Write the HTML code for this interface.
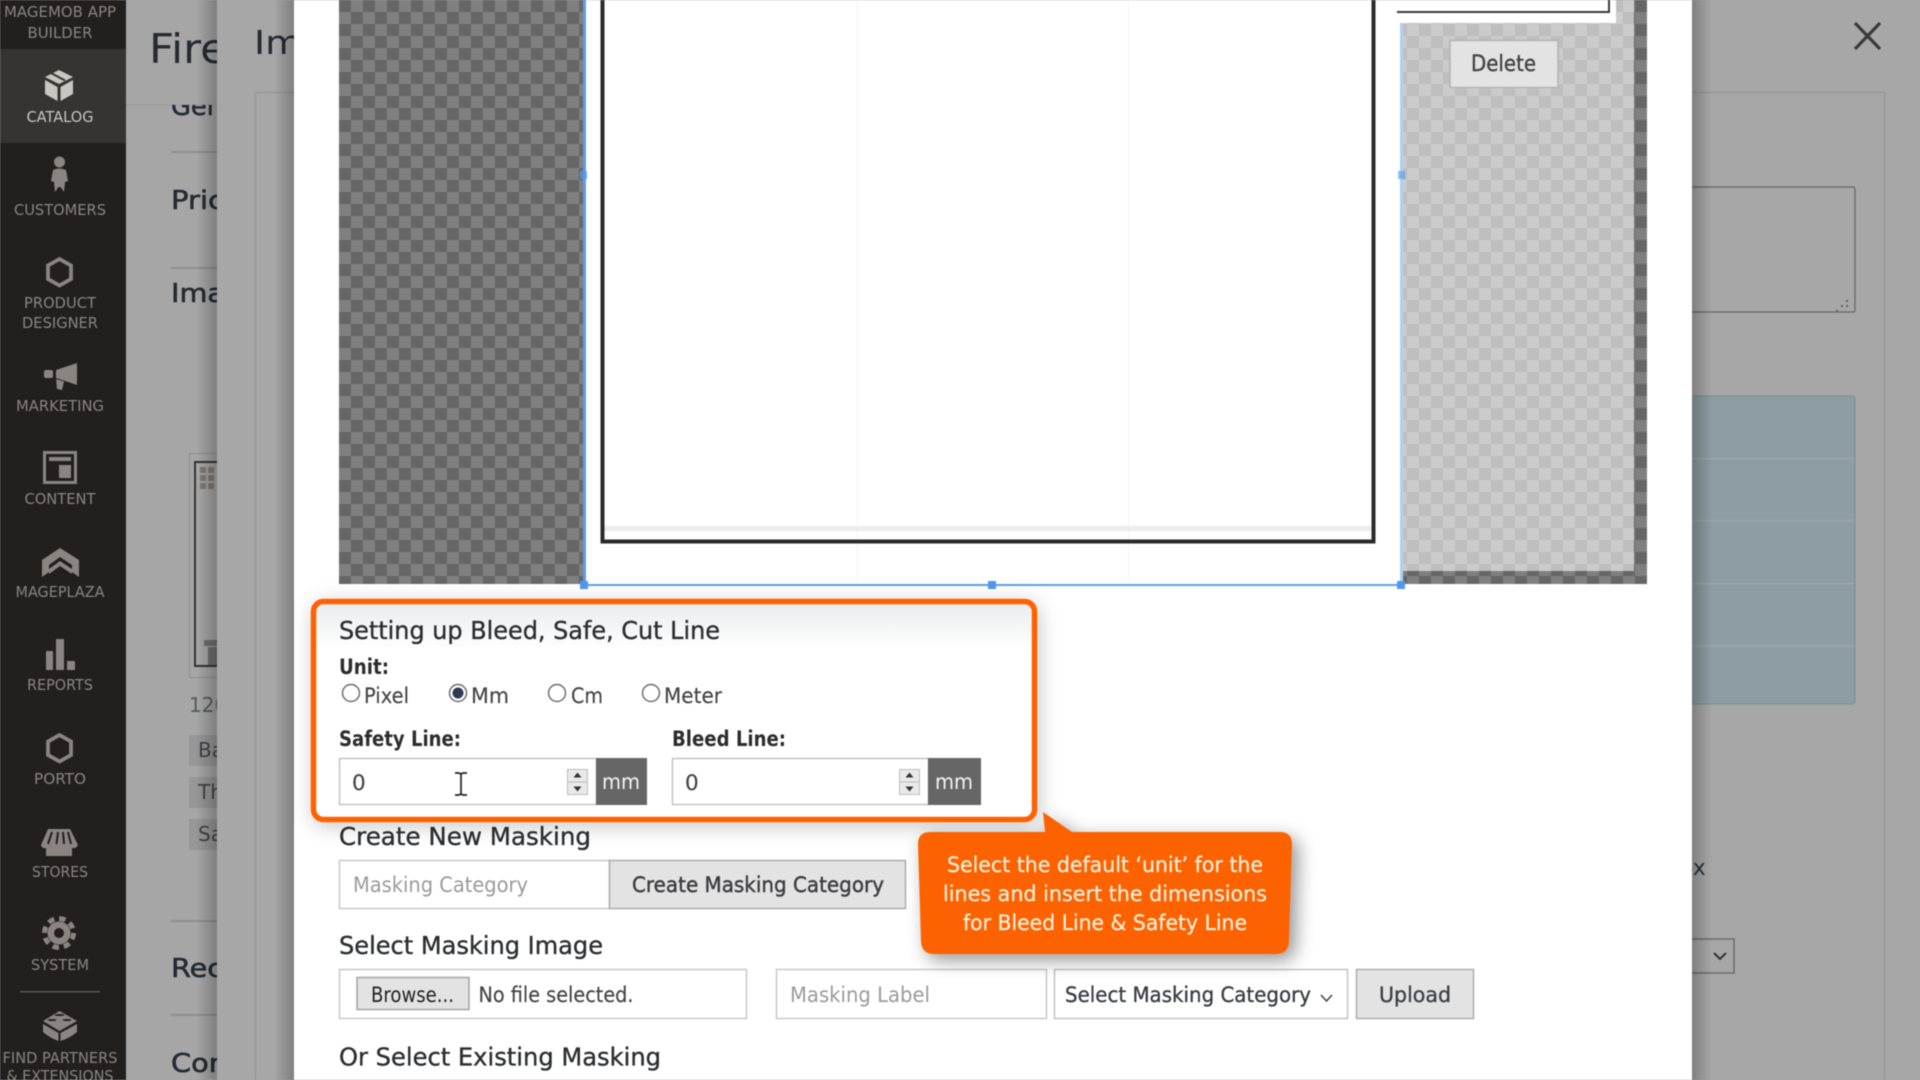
<!DOCTYPE html>
<html lang="en">
<head>
<meta charset="utf-8">
<title>Bleed, Safe, Cut Line</title>
<style>
html,body{margin:0;padding:0;width:1920px;height:1080px;overflow:hidden;background:#a6a6a6}
svg{display:block;filter:blur(.55px)}
text{font-family:"DejaVu Sans","Liberation Sans",sans-serif}
.n{font-size:15px;fill:#8a8580;text-anchor:middle}
.h{font-size:25px;fill:#2b2d2f;stroke:#2b2d2f;stroke-width:.35px}
.b{font-size:21px;fill:#2c2c2c;font-weight:bold}
.r{font-size:21.500px;fill:#444;stroke:#444;stroke-width:.15px}
.p{font-size:21.500px;fill:#9a9a9a}
.k{font-size:26px;fill:#252b33;stroke:#252b33;stroke-width:.6px}
.c{font-size:21.500px;fill:#fff1dd;text-anchor:middle;stroke:#fff1dd;stroke-width:.2px}
.i{fill:#8a8580}
</style>
</head>
<body>
<svg xmlns="http://www.w3.org/2000/svg" width="1920" height="1080" viewBox="0 0 1920 1080">
<defs>
<pattern id="pd" width="24" height="24" patternUnits="userSpaceOnUse" x="339" y="0">
<rect width="24" height="24" fill="#808080"/><rect width="12" height="12" fill="#666"/><rect x="12" y="12" width="12" height="12" fill="#666"/>
</pattern>
<pattern id="pl" width="24" height="24" patternUnits="userSpaceOnUse" x="339" y="0">
<rect width="24" height="24" fill="#cbcbcb"/><rect width="12" height="12" fill="#bebebe"/><rect x="12" y="12" width="12" height="12" fill="#bebebe"/>
</pattern>
<linearGradient id="sl" x1="0" x2="1" y1="0" y2="0"><stop offset="0" stop-color="#000" stop-opacity="0"/><stop offset="1" stop-color="#000" stop-opacity=".24"/></linearGradient>
<linearGradient id="sr" x1="0" x2="1" y1="0" y2="0"><stop offset="0" stop-color="#000" stop-opacity=".24"/><stop offset="1" stop-color="#000" stop-opacity="0"/></linearGradient>
<linearGradient id="top" x1="0" x2="0" y1="0" y2="1"><stop offset="0" stop-color="#e9ebec"/><stop offset=".22" stop-color="#fff"/></linearGradient>
<filter id="fc" x="-20%" y="-30%" width="150%" height="170%"><feDropShadow dx="6" dy="6" stdDeviation="9" flood-color="#000" flood-opacity=".42"/></filter>
<filter id="fb" x="-10%" y="-20%" width="120%" height="140%"><feDropShadow dx="2" dy="4" stdDeviation="10" flood-color="#000" flood-opacity=".22"/></filter>
</defs>

<!-- base -->
<rect width="1920" height="1080" fill="#a6a6a6"/>

<!-- background page content -->
<text x="171" y="115" class="k" textLength="52" lengthAdjust="spacingAndGlyphs">Gen</text>
<rect x="126" y="0" width="100" height="104" fill="#a6a6a6"/>
<rect x="126" y="104" width="100" height="1" fill="#999"/>
<text x="149" y="63" font-size="41" fill="#262b31" textLength="78" lengthAdjust="spacingAndGlyphs">Fire</text>
<rect x="171" y="151" width="60" height="2" fill="#8f8f8f"/>
<rect x="171" y="267" width="60" height="2" fill="#8f8f8f"/>
<rect x="171" y="920" width="60" height="2" fill="#8f8f8f"/>
<rect x="171" y="1014" width="60" height="2" fill="#8f8f8f"/>
<text x="171" y="209" class="k" textLength="53" lengthAdjust="spacingAndGlyphs">Pric</text>
<text x="171" y="302" class="k" textLength="54" lengthAdjust="spacingAndGlyphs">Ima</text>
<text x="171" y="977" class="k" textLength="52" lengthAdjust="spacingAndGlyphs">Rec</text>
<text x="171" y="1072" class="k" textLength="56" lengthAdjust="spacingAndGlyphs">Con</text>
<rect x="189.500" y="453.500" width="50" height="224" fill="none" stroke="#8d8d8d"/>
<rect x="195" y="462" width="50" height="204" fill="none" stroke="#333" stroke-width="2"/>
<g fill="#7f7a77"><rect x="200" y="467" width="6" height="6"/><rect x="208" y="467" width="6" height="6"/><rect x="200" y="475" width="6" height="6"/><rect x="208" y="475" width="6" height="6"/><rect x="200" y="483" width="6" height="6"/><rect x="208" y="483" width="6" height="6"/></g>
<path d="M204 640h24v6h-24zM208 647h22v18h-22z" fill="#6f6f6f"/>
<text x="189" y="712" font-size="20" fill="#56595c">120</text>
<rect x="189" y="735" width="40" height="31" fill="#979797"/>
<rect x="189" y="777" width="40" height="31" fill="#979797"/>
<rect x="189" y="819" width="40" height="31" fill="#979797"/>
<text x="198" y="757" font-size="20" fill="#3f4246">Ba</text>
<text x="198" y="799" font-size="20" fill="#3f4246">Th</text>
<text x="198" y="841" font-size="20" fill="#3f4246">Sa</text>

<!-- panel shadow + panel 2 -->
<rect x="196" y="0" width="21" height="1080" fill="url(#sl)"/>
<rect x="217" y="0" width="1703" height="1080" fill="#a7a7a7"/>
<text x="254" y="54" font-size="33" fill="#262b31" textLength="48" lengthAdjust="spacingAndGlyphs">Im</text>
<path d="M255.500 1080V92.500H1884.500V1080" fill="none" stroke="#999" stroke-width="1.500"/>

<!-- right side content -->
<rect x="1600" y="187" width="255" height="125" rx="2" fill="none" stroke="#707070" stroke-width="1.500"/>
<g fill="#5f5f5f"><rect x="1846" y="300" width="2" height="2"/><rect x="1841" y="305" width="2" height="2"/><rect x="1846" y="305" width="2" height="2"/><rect x="1836" y="310" width="2" height="2"/></g>
<rect x="1600" y="396" width="255" height="308" rx="3" fill="#8d9da2" stroke="#808b8f"/>
<g fill="#9aa8ac"><rect x="1600" y="458" width="254" height="1.500"/><rect x="1600" y="520" width="254" height="1.500"/><rect x="1600" y="583" width="254" height="1.500"/><rect x="1600" y="645" width="254" height="1.500"/></g>
<text x="1680" y="875" font-size="22" fill="#2c3238">ox</text>
<rect x="1600" y="939" width="134" height="34" fill="none" stroke="#6c6c6c" stroke-width="1.500"/>
<path d="M1714 953l6 6 6-6" fill="none" stroke="#333" stroke-width="2"/>
<path d="M1855 23L1880 49M1880 23L1855 49" stroke="#3a3a3c" stroke-width="3.200" fill="none"/>

<!-- modal -->
<rect x="274" y="0" width="20" height="1080" fill="url(#sl)"/>
<rect x="1692" y="0" width="20" height="1080" fill="url(#sr)"/>
<rect x="294" y="0" width="1398" height="1080" fill="#fff"/>

<!-- canvas -->
<rect x="339" y="0" width="1308" height="584" fill="url(#pd)"/>
<rect x="1401" y="0" width="233" height="571" fill="url(#pl)"/>
<rect x="1401" y="0" width="2" height="585" fill="#b6d3f5"/>
<rect x="584" y="0" width="817" height="585" fill="#fff"/>
<rect x="583" y="0" width="3" height="585" fill="#5f9be0"/>
<rect x="1400" y="0" width="2" height="585" fill="#a9cdf6"/>
<rect x="584" y="584" width="818" height="2" fill="#5b9ff0"/>
<g fill="#efefef" opacity=".6"><rect x="857" y="0" width="1" height="584"/><rect x="1128" y="0" width="1" height="584"/></g>
<rect x="604" y="526" width="767" height="5" fill="#ececec"/>
<path d="M602.500 0V541.500H1373.500V0" fill="none" stroke="#2b2b2b" stroke-width="4"/>
<g fill="#4f97f2">
<rect x="580" y="171" width="7" height="8" opacity=".75"/><rect x="1398" y="171" width="7" height="8" opacity=".6"/>
<rect x="580" y="581" width="8" height="8"/><rect x="988" y="581" width="8" height="8"/><rect x="1397" y="581" width="8" height="8"/>
</g>
<rect x="1396" y="0" width="220" height="23" fill="#fff"/>
<path d="M1397 12H1609V0" fill="none" stroke="#3a3a3a" stroke-width="2"/>
<rect x="1450" y="40.500" width="108" height="47" fill="#e3e3e3" stroke="#b3b3b3" stroke-width="1.500"/>
<text x="1471" y="71" font-size="22" fill="#454548" stroke="#454548" stroke-width=".4" textLength="65" lengthAdjust="spacingAndGlyphs">Delete</text>

<!-- orange box -->
<rect x="313.500" y="601.500" width="721" height="218" rx="10" fill="url(#top)" stroke="#fd6205" stroke-width="5.500" filter="url(#fb)"/>
<text x="339" y="639" class="h" textLength="381" lengthAdjust="spacingAndGlyphs">Setting up Bleed, Safe, Cut Line</text>
<text x="339" y="674" class="b" textLength="50" lengthAdjust="spacingAndGlyphs">Unit:</text>
<circle cx="351" cy="693" r="8.500" fill="#fff" stroke="#6f6f6f" stroke-width="1.500"/>
<circle cx="458" cy="693" r="8.500" fill="#fff" stroke="#6f6f6f" stroke-width="1.500"/><circle cx="458" cy="693" r="5.500" fill="#2e3b55"/>
<circle cx="557" cy="693" r="8.500" fill="#fff" stroke="#6f6f6f" stroke-width="1.500"/>
<circle cx="651" cy="693" r="8.500" fill="#fff" stroke="#6f6f6f" stroke-width="1.500"/>
<text x="364" y="703" class="r" textLength="45" lengthAdjust="spacingAndGlyphs">Pixel</text>
<text x="471" y="703" class="r" textLength="38" lengthAdjust="spacingAndGlyphs">Mm</text>
<text x="571" y="703" class="r" textLength="32" lengthAdjust="spacingAndGlyphs">Cm</text>
<text x="664" y="703" class="r" textLength="58" lengthAdjust="spacingAndGlyphs">Meter</text>
<text x="339" y="746" class="b" textLength="122" lengthAdjust="spacingAndGlyphs">Safety Line:</text>
<text x="672" y="746" class="b" textLength="114" lengthAdjust="spacingAndGlyphs">Bleed Line:</text>

<rect x="339.500" y="758.500" width="257" height="46" fill="#fff" stroke="#c4c4c4" stroke-width="1.500"/>
<rect x="596" y="758" width="51" height="47" fill="#666"/>
<text x="621" y="789" font-size="21.500" fill="#f4f4f4" text-anchor="middle" textLength="38" lengthAdjust="spacingAndGlyphs">mm</text>
<text x="352" y="790" class="r">0</text>
<g>
<rect x="567.500" y="769.500" width="20" height="25" fill="#e9e9e9" stroke="#bcbcbc"/>
<path d="M568 782H587" stroke="#bcbcbc"/>
<path d="M577.500 772.500l4 5h-8zM577.500 791.500l4-5h-8z" fill="#333"/>
</g>
<rect x="672.500" y="758.500" width="256" height="46" fill="#fff" stroke="#c4c4c4" stroke-width="1.500"/>
<rect x="928" y="758" width="53" height="47" fill="#666"/>
<text x="954" y="789" font-size="21.500" fill="#f4f4f4" text-anchor="middle" textLength="38" lengthAdjust="spacingAndGlyphs">mm</text>
<text x="685" y="790" class="r">0</text>
<g>
<rect x="899.500" y="769.500" width="20" height="25" fill="#e9e9e9" stroke="#bcbcbc"/>
<path d="M900 782H919" stroke="#bcbcbc"/>
<path d="M909.500 772.500l4 5h-8zM909.500 791.500l4-5h-8z" fill="#333"/>
</g>
<path d="M455 773h4l2 1 2-1h4M461 774V794M455 795h4l2-1 2 1h4" fill="none" stroke="#222" stroke-width="1.700"/>

<!-- create new masking -->
<text x="339" y="845" class="h" textLength="252" lengthAdjust="spacingAndGlyphs">Create New Masking</text>
<rect x="339.500" y="860.500" width="270" height="48" fill="#fff" stroke="#c9c9c9" stroke-width="1.500"/>
<text x="353" y="892" class="p" textLength="175" lengthAdjust="spacingAndGlyphs">Masking Category</text>
<rect x="609.500" y="860.500" width="296" height="48" fill="#e3e3e3" stroke="#adadad" stroke-width="1.500"/>
<text x="632" y="892" font-size="21.500" style="fill:#3d3d40;stroke:#3d3d40;stroke-width:.45px" textLength="252" lengthAdjust="spacingAndGlyphs">Create Masking Category</text>

<text x="339" y="954" class="h" textLength="264" lengthAdjust="spacingAndGlyphs">Select Masking Image</text>
<rect x="339.500" y="969.500" width="407" height="49" fill="#fff" stroke="#c9c9c9" stroke-width="1.500"/>
<rect x="357" y="977.500" width="112" height="32" fill="#e3e3e3" stroke="#a4a4a4" stroke-width="1.500"/>
<text x="371" y="1002" font-size="21.500" fill="#222" textLength="83" lengthAdjust="spacingAndGlyphs">Browse...</text>
<text x="478.500" y="1002" class="r" textLength="155" lengthAdjust="spacingAndGlyphs">No file selected.</text>
<rect x="776.500" y="969.500" width="270" height="49" fill="#fff" stroke="#c9c9c9" stroke-width="1.500"/>
<text x="790" y="1002" class="p" textLength="140" lengthAdjust="spacingAndGlyphs">Masking Label</text>
<rect x="1054.500" y="969.500" width="293" height="49" fill="#fff" stroke="#c4c4c4" stroke-width="1.500"/>
<text x="1065" y="1002" font-size="21.500" fill="#3a3d42" style="stroke:#3a3d42;stroke-width:.35px" textLength="246" lengthAdjust="spacingAndGlyphs">Select Masking Category</text>
<path d="M1321 995l5.500 6 5.500-6" fill="none" stroke="#444" stroke-width="1.500"/>
<rect x="1356.500" y="969.500" width="117" height="49" fill="#e3e3e3" stroke="#adadad" stroke-width="1.500"/>
<text x="1379" y="1002" font-size="21.500" fill="#3d3f44" style="stroke:#3d3f44;stroke-width:.35px" textLength="72" lengthAdjust="spacingAndGlyphs">Upload</text>
<text x="339" y="1065.500" class="h" textLength="322" lengthAdjust="spacingAndGlyphs">Or Select Existing Masking</text>

<!-- callout -->
<path d="M930 832H1045L1043 812L1072 832H1280Q1292 832 1292 844L1289 942Q1288 954 1276 954H934Q922 954 921 942L918 844Q918 832 930 832Z" fill="#fd6204" filter="url(#fc)"/>
<text x="1105" y="872" class="c" textLength="316" lengthAdjust="spacingAndGlyphs">Select the default ‘unit’ for the</text>
<text x="1105" y="901" class="c" textLength="324" lengthAdjust="spacingAndGlyphs">lines and insert the dimensions</text>
<text x="1105" y="930" class="c" textLength="284" lengthAdjust="spacingAndGlyphs">for Bleed Line &amp; Safety Line</text>

<!-- sidebar -->
<rect x="0" y="0" width="126" height="1080" fill="#231f1d"/>
<rect x="0" y="49" width="126" height="94" fill="#373330"/>
<text x="60" y="17" class="n" textLength="112" lengthAdjust="spacingAndGlyphs">MAGEMOB APP</text>
<text x="60" y="38" class="n" textLength="65" lengthAdjust="spacingAndGlyphs">BUILDER</text>

<!-- catalog icon -->
<g fill="#c9c5c0">
<path d="M59 70L73 77L59 84L45 77Z"/><path d="M45 80L57.500 87V101L45 94Z"/><path d="M73 80L60.500 87V101L73 94Z"/>
</g>
<path d="M51 73L65 80.500" stroke="#373330" stroke-width="2" fill="none"/>
<text x="60" y="122" class="n" style="fill:#c9c5c0" textLength="67" lengthAdjust="spacingAndGlyphs">CATALOG</text>

<!-- customers icon -->
<g class="i"><circle cx="59.500" cy="162" r="5.500"/><path d="M53 170Q59 167 66 170L68 181L65 182L64 192L60.500 187H58.500L55 192L54 182L51 181Z"/></g>
<text x="60" y="215" class="n" textLength="92" lengthAdjust="spacingAndGlyphs">CUSTOMERS</text>

<!-- designer hex -->
<path d="M59.500 259L71 265.500V279L59.500 285.500L48 279V265.500Z" fill="none" stroke="#8a8580" stroke-width="3.800"/>
<text x="60" y="308" class="n" textLength="72" lengthAdjust="spacingAndGlyphs">PRODUCT</text>
<text x="60" y="328" class="n" textLength="76" lengthAdjust="spacingAndGlyphs">DESIGNER</text>

<!-- marketing -->
<g class="i"><path d="M77 363V385L56 378V370Z"/><rect x="44" y="370" width="9" height="8" rx="2"/><path d="M56 379L64 381.500L62 390L57 389Z"/></g>
<text x="60" y="411" class="n" textLength="88" lengthAdjust="spacingAndGlyphs">MARKETING</text>

<!-- content -->
<rect x="43" y="451" width="34" height="33" fill="#8a8580"/>
<rect x="46" y="454" width="28" height="27" fill="#231f1d"/>
<rect x="49" y="457" width="22" height="4" fill="#8a8580"/>
<rect x="59" y="465" width="12" height="13" fill="#8a8580"/>
<text x="60" y="504" class="n" textLength="71" lengthAdjust="spacingAndGlyphs">CONTENT</text>

<!-- mageplaza -->
<path class="i" d="M60 548L79 560V577L72 572V565L60 557L49 565V572L42 577V560Z"/>
<path class="i" d="M60 561L72 569V574L60 566L49 574V569Z"/>
<text x="60" y="597" class="n" textLength="89" lengthAdjust="spacingAndGlyphs">MAGEPLAZA</text>

<!-- reports -->
<g class="i"><rect x="46" y="651" width="7" height="19"/><rect x="56" y="639" width="8" height="31"/><rect x="67" y="661" width="8" height="9"/></g>
<text x="60" y="690" class="n" textLength="66" lengthAdjust="spacingAndGlyphs">REPORTS</text>

<!-- porto -->
<path d="M59.500 735L71 741.500V755L59.500 761.500L48 755V741.500Z" fill="none" stroke="#8a8580" stroke-width="3.800"/>
<text x="60" y="784" class="n" textLength="52" lengthAdjust="spacingAndGlyphs">PORTO</text>

<!-- stores -->
<path class="i" d="M48 829H70L78 845Q76 849 72 848V856H46V848Q42 849 41 845Z"/>
<path d="M52 832L48 844M58 832L56.500 844M63 832L64 844M68 832L71 844" stroke="#231f1d" stroke-width="2" fill="none"/>
<text x="60" y="877" class="n" textLength="56" lengthAdjust="spacingAndGlyphs">STORES</text>

<!-- system gear -->
<circle cx="59" cy="933" r="11.500" fill="#8a8580"/>
<circle cx="59" cy="933" r="14.500" fill="none" stroke="#8a8580" stroke-width="5" stroke-dasharray="6.400 5"/>
<circle cx="59" cy="933" r="5" fill="#231f1d"/>
<text x="60" y="970" class="n" textLength="58" lengthAdjust="spacingAndGlyphs">SYSTEM</text>
<rect x="20" y="991" width="80" height="1.500" fill="#595552"/>

<!-- partners lego -->
<g class="i" transform="translate(0,-2)"><path d="M59.500 1013L77 1023L59.500 1033L43 1023Z"/><path d="M43 1026L58.500 1035V1043Q50 1040 43 1034Z"/><path d="M77 1026L60.500 1035V1043Q70 1040 77 1034Z"/></g>
<g fill="#231f1d" transform="translate(0,-2)"><ellipse cx="59.500" cy="1017" rx="5" ry="1"/><ellipse cx="52" cy="1022" rx="4.500" ry="1"/><ellipse cx="67" cy="1022" rx="4.500" ry="1"/></g>
<text x="60" y="1063" class="n" textLength="115" lengthAdjust="spacingAndGlyphs">FIND PARTNERS</text>
<text x="60" y="1081" class="n" textLength="107" lengthAdjust="spacingAndGlyphs">&amp; EXTENSIONS</text>
</svg>
</body>
</html>
